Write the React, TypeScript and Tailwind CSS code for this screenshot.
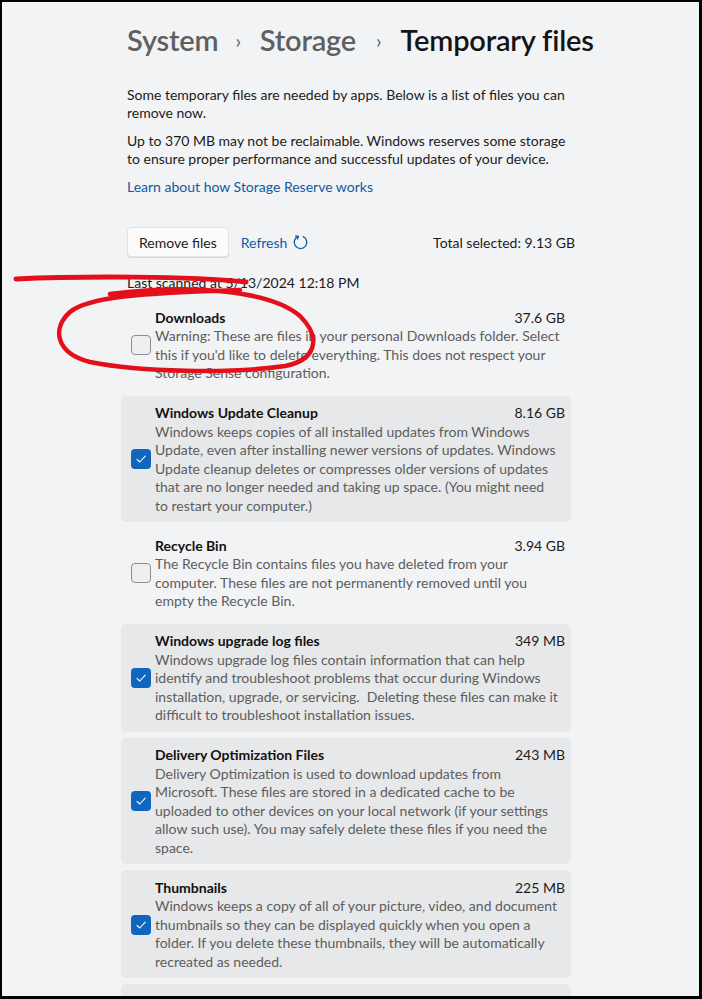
import React from "react";

type Item = { title: string; size: string; checked: boolean; lines: string[] };

const items: Item[] = [
  {
    title: "Downloads",
    size: "37.6 GB",
    checked: false,
    lines: [
      "Warning: These are files in your personal Downloads folder. Select",
      "this if you'd like to delete everything. This does not respect your",
      "Storage Sense configuration.",
    ],
  },
  {
    title: "Windows Update Cleanup",
    size: "8.16 GB",
    checked: true,
    lines: [
      "Windows keeps copies of all installed updates from Windows",
      "Update, even after installing newer versions of updates. Windows",
      "Update cleanup deletes or compresses older versions of updates",
      "that are no longer needed and taking up space. (You might need",
      "to restart your computer.)",
    ],
  },
  {
    title: "Recycle Bin",
    size: "3.94 GB",
    checked: false,
    lines: [
      "The Recycle Bin contains files you have deleted from your",
      "computer. These files are not permanently removed until you",
      "empty the Recycle Bin.",
    ],
  },
  {
    title: "Windows upgrade log files",
    size: "349 MB",
    checked: true,
    lines: [
      "Windows upgrade log files contain information that can help",
      "identify and troubleshoot problems that occur during Windows",
      "installation, upgrade, or servicing.\u00a0 Deleting these files can make it",
      "difficult to troubleshoot installation issues.",
    ],
  },
  {
    title: "Delivery Optimization Files",
    size: "243 MB",
    checked: true,
    lines: [
      "Delivery Optimization is used to download updates from",
      "Microsoft. These files are stored in a dedicated cache to be",
      "uploaded to other devices on your local network (if your settings",
      "allow such use). You may safely delete these files if you need the",
      "space.",
    ],
  },
  {
    title: "Thumbnails",
    size: "225 MB",
    checked: true,
    lines: [
      "Windows keeps a copy of all of your picture, video, and document",
      "thumbnails so they can be displayed quickly when you open a",
      "folder. If you delete these thumbnails, they will be automatically",
      "recreated as needed.",
    ],
  },
];

function CheckBox({ checked }: { checked: boolean }) {
  if (checked) {
    return (
      <div className="w-[20px] h-[20px] rounded-[4px] bg-[#0f66be] flex items-center justify-center shrink-0">
        <svg width="12" height="12" viewBox="0 0 12 12" fill="none">
          <path d="M2 6.3 L4.8 9 L10.2 3.2" stroke="white" strokeWidth="1.1" strokeLinecap="round" strokeLinejoin="round" />
        </svg>
      </div>
    );
  }
  return <div className="w-[20px] h-[20px] rounded-[4px] border border-[#8d8d8d] bg-[#eeeff1] shrink-0" />;
}

function Card({ item }: { item: Item }) {
  return (
    <div
      className={
        "flex items-center rounded-[5px] pl-[10px] pr-[6px] pt-[8px] pb-[7px] " +
        (item.checked ? "bg-[#e7e8ea]" : "")
      }
    >
      <CheckBox checked={item.checked} />
      <div className="ml-[4px] flex-1">
        <div className="flex justify-between items-center h-[18px] mb-[1px]">
          <span className="font-bold text-[#111] text-[14px]">{item.title}</span>
          <span className="text-[#1c1c1c] text-[14px]">{item.size}</span>
        </div>
        <div className="text-[#5d5d5d] text-[14px] leading-[18.5px]">
          {item.lines.map((l, i) => (
            <div key={i} className="whitespace-nowrap">
              {l}
            </div>
          ))}
        </div>
      </div>
    </div>
  );
}

export default function App() {
  return (
    <div className="w-[702px] h-[999px] bg-black pt-[2px] pl-[2px] pr-[3px] pb-[3px] overflow-hidden">
      <div
        className="relative h-full w-full bg-[#f2f3f5] overflow-hidden"
        style={{ fontFamily: "Lato, 'Open Sans', sans-serif" }}
      >
        <div className="ml-[125px] w-[448px]">
          <div className="flex items-center h-[40px] mt-[18px] text-[29px] font-semibold tracking-[-0.2px] whitespace-nowrap">
            <span className="text-[#5f5f5f]">System</span>
            <span className="text-[#5f5f5f] text-[20px] ml-[17px] mr-[19px] font-normal">›</span>
            <span className="text-[#5f5f5f]">Storage</span>
            <span className="text-[#5f5f5f] text-[20px] ml-[20px] mr-[19px] font-normal">›</span>
            <span className="text-[#141414]">Temporary files</span>
          </div>

          <div className="mt-[26px] text-[14px] leading-[18px] text-[#1b1b1b]">
            <p>Some temporary files are needed by apps. Below is a list of files you can</p>
            <p>remove now.</p>
          </div>
          <div className="mt-[10px] text-[14px] leading-[18px] text-[#1b1b1b]">
            <p>Up to 370 MB may not be reclaimable. Windows reserves some storage</p>
            <p>to ensure proper performance and successful updates of your device.</p>
          </div>
          <div className="mt-[10px] text-[14px] leading-[18px] text-[#0f5aa3]">
            Learn about how Storage Reserve works
          </div>

          <div className="mt-[31px] flex items-center h-[30px]">
            <button className="h-[30px] px-[11px] bg-[#fbfbfb] border border-[#e3e3e3] rounded-[4px] text-[14px] text-[#1b1b1b] shadow-[0_1px_0_#d8d8d8]">
              Remove files
            </button>
            <span className="ml-[12px] text-[14px] text-[#0f5aa3]">Refresh</span>
            <svg className="ml-[5px]" width="17" height="17" viewBox="0 0 17 17" fill="none">
              <path
                d="M6.2 2.4 A6.3 6.3 0 1 0 11.2 2.6"
                stroke="#0f5aa3"
                strokeWidth="1.3"
                strokeLinecap="round"
              />
              <path d="M3.6 1.8 L6.3 2.4 L5.5 5" stroke="#0f5aa3" strokeWidth="1.3" strokeLinecap="round" strokeLinejoin="round" />
            </svg>
            <span className="ml-auto text-[14px] text-[#1b1b1b]">Total selected: 9.13 GB</span>
          </div>

          <div className="mt-[17px] text-[14px] leading-[18px] text-[#1b1b1b]">Last scanned at 5/13/2024 12:18 PM</div>

          <div className="mt-[8px] -ml-[6px] mr-[4px] flex flex-col gap-[6px]">
            {items.map((it) => (
              <Card key={it.title} item={it} />
            ))}
            <div className="h-[60px] rounded-[5px] bg-[#e7e8ea]" />
          </div>
        </div>

        <svg
          className="absolute left-0 top-0 pointer-events-none"
          width="702"
          height="999"
          viewBox="2 2 702 999"
          fill="none"
        >
          <path
            d="M16 279 C 80 276, 190 276, 246 282"
            stroke="#e3101b"
            strokeWidth="5"
            strokeLinecap="round"
          />
          <path
            d="M110 294 C 190 284, 270 290, 300 316 C 322 338, 316 360, 285 366 C 230 374, 140 372, 90 362 C 55 353, 52 328, 70 312 C 88 297, 140 293, 240 290"
            stroke="#e3101b"
            strokeWidth="4.5"
            strokeLinecap="round"
            strokeLinejoin="round"
          />
        </svg>
      </div>
    </div>
  );
}
